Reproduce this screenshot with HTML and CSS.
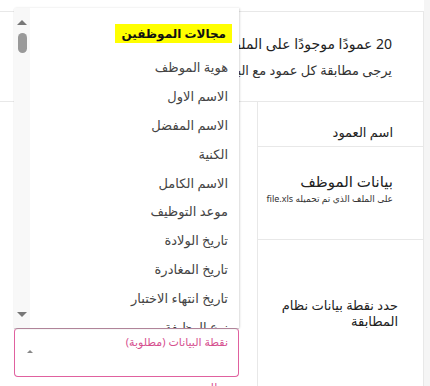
FILE: index.html
```html
<!DOCTYPE html>
<html lang="ar" dir="rtl">
<head>
    <meta charset="UTF-8">
    <meta name="viewport" content="width=device-width, initial-scale=1.0">
    <title>مطابقة الأعمدة</title>
<link rel="stylesheet" href="styles.css">
</head>
<body>
    <div class="page">
        <section class="card">
            <header class="card-head">
                <h1 class="title">20 عمودًا موجودًا على الملف</h1>
                <p class="subtitle">يرجى مطابقة كل عمود مع البيانات</p>
            </header>
            <div class="map">
                <div class="col-name head">اسم العمود</div>
                <div class="col-field"></div>

                <div class="col-name row">
                    <h2>بيانات الموظف</h2>
                    <p class="note">على الملف الذي تم تحميله file.xls</p>
                </div>
                <div class="col-field"></div>

                <div class="col-name row last">
                    <p class="pick">حدد نقطة بيانات نظام المطابقة</p>
                </div>
                <div class="col-field select-cell">
                    <div class="select">
                        <div class="menu">
                            <ul class="options">
                                <li class="group"><span>مجالات الموظفين</span></li>
                                <li>هوية الموظف</li>
                                <li>الاسم الاول</li>
                                <li>الاسم المفضل</li>
                                <li>الكنية</li>
                                <li>الاسم الكامل</li>
                                <li>موعد التوظيف</li>
                                <li>تاريخ الولادة</li>
                                <li>تاريخ المغادرة</li>
                                <li>تاريخ انتهاء الاختبار</li>
                                <li>نوع الوظيفة</li>
                            </ul>
                            <div class="scroll">
                                <span class="arrow up"></span>
                                <span class="thumb"></span>
                                <span class="arrow down"></span>
                            </div>
                        </div>
                        <div class="field">
                            <span class="label">نقطة البيانات (مطلوبة)</span>
                            <span class="caret"></span>
                        </div>
                    </div>
                    <p class="helper">مطلوب</p>
                </div>
            </div>
        </section>
    </div>
</body>
</html>
```

FILE: styles.css
```css
*{
    padding: 0;
    margin: 0;
    box-sizing: border-box;
}
html, body{
    height: 100%;
    overflow: hidden;
}
body{
    background: #f5f5f5;
    font-family: "Noto Sans", "DejaVu Sans", sans-serif;
    color: #222;
}
.page{
    background: #fff;
    margin-right: 6px;
    padding-top: 11px;
    height: 100%;
}
.card{
    border-top: 1px solid #e8e8e8;
    border-right: 1px solid #e8e8e8;
}
.card-head{
    padding: 19px 31px 18px 0;
    border-bottom: 1px solid #e8e8e8;
}
.title{
    font-size: 14px;
    font-weight: 400;
    line-height: 26px;
    color: #222;
}
.subtitle{
    font-size: 13px;
    line-height: 26px;
    color: #333;
}
.map{
    display: grid;
    grid-template-columns: 166px 1fr;
}
.col-name{
    border-left: 1px solid #e8e8e8;
    border-bottom: 1px solid #e8e8e8;
    padding-right: 30px;
}
.col-name.head{
    height: 45px;
    padding-top: 20px;
    font-size: 13px;
    line-height: 20px;
    font-weight: 500;
}
.col-name.row{
    height: 93px;
    padding-top: 24px;
}
.col-name h2{
    font-size: 15px;
    font-weight: 400;
    line-height: 20px;
}
.col-name .note{
    font-size: 9px;
    line-height: 16px;
    color: #333;
}
.col-name.last{
    border-bottom: none;
    height: auto;
    padding: 57px 25px 0 20px;
}
.pick{
    font-size: 13px;
    line-height: 16px;
    color: #222;
}
.select-cell{
    padding: 88px 18px 0 14px;
}
.select{
    position: relative;
}
.field{
    height: 49px;
    border: 1px solid #e0619f;
    border-top-color: #d9a3bd;
    border-radius: 4px;
    padding: 5px 10px 0 12px;
    display: flex;
    justify-content: space-between;
    align-items: flex-start;
}
.label{
    font-size: 11px;
    line-height: 16px;
    color: #d6508f;
}
.caret{
    margin-top: 16px;
    border-left: 3px solid transparent;
    border-right: 3px solid transparent;
    border-bottom: 3px solid #888;
}
.helper{
    font-size: 11px;
    line-height: 16px;
    color: #d6508f;
    padding: 2px 10px 0 0;
}
.menu{
    position: absolute;
    bottom: 100%;
    left: 0;
    right: 0;
    height: 320px;
    background: #fff;
    display: flex;
    box-shadow: 1px 0 2px rgba(0, 0, 0, .12), 0 1px 1px rgba(0, 0, 0, .15);
    overflow: hidden;
}
.options{
    list-style: none;
    flex: 1;
    padding: 6px 11px 0 0;
}
.options li{
    height: 28.8px;
    display: flex;
    align-items: center;
    font-size: 13px;
    color: #444;
}
.options li.group{
    height: 39px;
}
.group span{
    background: #ffff00;
    color: #111;
    font-size: 12px;
    font-weight: 700;
    line-height: 19px;
    padding: 0 6px;
    margin-right: -4px;
}
.scroll{
    width: 16px;
    background: #f8f8f8;
    display: flex;
    flex-direction: column;
    align-items: center;
    padding-top: 12px;
}
.arrow{
    border-left: 5px solid transparent;
    border-right: 5px solid transparent;
}
.arrow.up{
    border-bottom: 5px solid #777;
}
.arrow.down{
    border-top: 5px solid #777;
    margin-top: auto;
    margin-bottom: 11px;
}
.thumb{
    width: 9px;
    height: 20px;
    border-radius: 5px;
    background: #999;
    margin-top: 8px;
}
```
